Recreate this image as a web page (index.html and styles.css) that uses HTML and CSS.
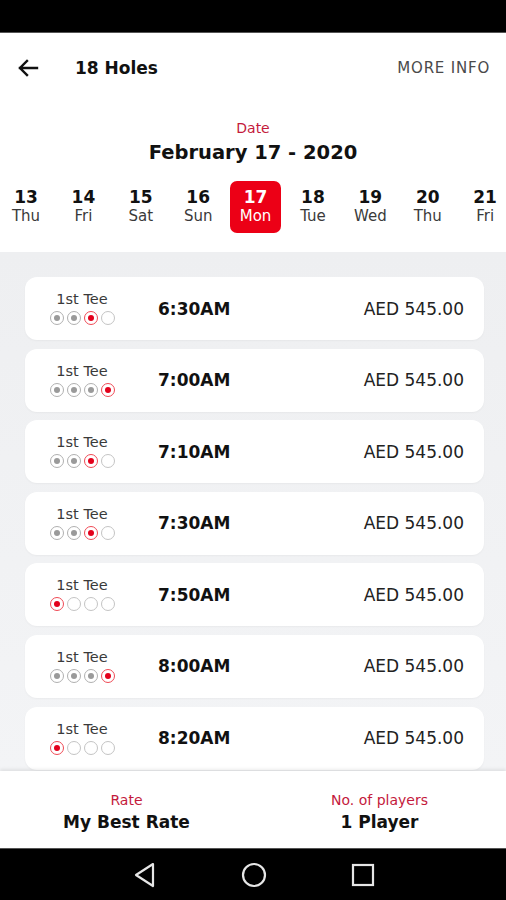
FILE: index.html
```html
<!DOCTYPE html>
<html>
<head>
<meta charset="utf-8">
<link rel="stylesheet" href="styles.css">
</head>
<body>
<div class="screen">
  <div class="statusbar"></div>
  <div class="top">
    <div class="appbar">
      <svg class="back" width="22" height="18" viewBox="0 0 22 18"><path d="M20 9H3M10 2L3 9l7 7" fill="none" stroke="#111" stroke-width="2.4" stroke-linecap="square"/></svg>
      <div class="title">18 Holes</div>
      <div class="more">MORE INFO</div>
    </div>
    <div class="date-label">Date</div>
    <div class="date-value">February 17 - 2020</div>
    <div class="strip">
      <div class="day"><div class="num">13</div><div class="wd">Thu</div></div>
      <div class="day"><div class="num">14</div><div class="wd">Fri</div></div>
      <div class="day"><div class="num">15</div><div class="wd">Sat</div></div>
      <div class="day"><div class="num">16</div><div class="wd">Sun</div></div>
      <div class="day sel"><div class="num">17</div><div class="wd">Mon</div></div>
      <div class="day"><div class="num">18</div><div class="wd">Tue</div></div>
      <div class="day"><div class="num">19</div><div class="wd">Wed</div></div>
      <div class="day"><div class="num">20</div><div class="wd">Thu</div></div>
      <div class="day"><div class="num">21</div><div class="wd">Fri</div></div>
    </div>
  </div>
  <div class="list">
    <div class="card">
      <div class="tee"><div class="tee-name">1st Tee</div><div class="dots"><span class="dot g"></span><span class="dot g"></span><span class="dot r"></span><span class="dot e"></span></div></div>
      <div class="time">6:30AM</div><div class="price">AED 545.00</div>
    </div>
    <div class="card">
      <div class="tee"><div class="tee-name">1st Tee</div><div class="dots"><span class="dot g"></span><span class="dot g"></span><span class="dot g"></span><span class="dot r"></span></div></div>
      <div class="time">7:00AM</div><div class="price">AED 545.00</div>
    </div>
    <div class="card">
      <div class="tee"><div class="tee-name">1st Tee</div><div class="dots"><span class="dot g"></span><span class="dot g"></span><span class="dot r"></span><span class="dot e"></span></div></div>
      <div class="time">7:10AM</div><div class="price">AED 545.00</div>
    </div>
    <div class="card">
      <div class="tee"><div class="tee-name">1st Tee</div><div class="dots"><span class="dot g"></span><span class="dot g"></span><span class="dot r"></span><span class="dot e"></span></div></div>
      <div class="time">7:30AM</div><div class="price">AED 545.00</div>
    </div>
    <div class="card">
      <div class="tee"><div class="tee-name">1st Tee</div><div class="dots"><span class="dot r"></span><span class="dot e"></span><span class="dot e"></span><span class="dot e"></span></div></div>
      <div class="time">7:50AM</div><div class="price">AED 545.00</div>
    </div>
    <div class="card">
      <div class="tee"><div class="tee-name">1st Tee</div><div class="dots"><span class="dot g"></span><span class="dot g"></span><span class="dot g"></span><span class="dot r"></span></div></div>
      <div class="time">8:00AM</div><div class="price">AED 545.00</div>
    </div>
    <div class="card">
      <div class="tee"><div class="tee-name">1st Tee</div><div class="dots"><span class="dot r"></span><span class="dot e"></span><span class="dot e"></span><span class="dot e"></span></div></div>
      <div class="time">8:20AM</div><div class="price">AED 545.00</div>
    </div>
  </div>
  <div class="footer">
    <div class="fcol"><div class="flabel">Rate</div><div class="fvalue">My Best Rate</div></div>
    <div class="fcol"><div class="flabel">No. of players</div><div class="fvalue">1 Player</div></div>
  </div>
  <div class="navbar">
    <svg width="24" height="26" viewBox="0 0 24 26"><path d="M20 2L3 13l17 11z" fill="none" stroke="#e6e6e6" stroke-width="2.2" stroke-linejoin="round"/></svg>
    <svg width="26" height="26" viewBox="0 0 26 26"><circle cx="13" cy="13" r="11" fill="none" stroke="#e6e6e6" stroke-width="2.2"/></svg>
    <svg width="24" height="24" viewBox="0 0 24 24"><rect x="2" y="2" width="20" height="20" fill="none" stroke="#e6e6e6" stroke-width="2.2"/></svg>
  </div>
</div>
</body>
</html>
```
FILE: styles.css
```css
* { box-sizing: border-box; }
html, body { margin: 0; padding: 0; }
body {
  font-family: "DejaVu Sans", Verdana, sans-serif;
  color: #111;
  background: #000;
}
.screen {
  width: 506px;
  height: 900px;
  display: flex;
  flex-direction: column;
  overflow: hidden;
  background: #fff;
}
.statusbar {
  height: 33px;
  background: #000;
  border-bottom: 1px solid #555;
  flex: none;
}
.top {
  background: #fff;
  flex: none;
  padding-bottom: 19px;
}
.appbar {
  height: 70px;
  display: flex;
  align-items: center;
  padding: 0 16px 0 17px;
}
.back { flex: none; }
.title {
  margin-left: 36px;
  font-weight: bold;
  font-size: 17px;
  flex: 1;
}
.more {
  font-size: 15px;
  letter-spacing: 0.8px;
  color: #4a4a4a;
}
.date-label {
  margin-top: 16px;
  text-align: center;
  font-size: 14px;
  line-height: 18px;
  color: #c41a3c;
}
.date-value {
  margin-top: 3px;
  text-align: center;
  font-size: 19.5px;
  line-height: 26px;
  font-weight: bold;
}
.strip {
  margin-top: 15px;
  display: flex;
  gap: 6.4px;
  padding-left: 0.5px;
}
.day {
  flex: none;
  width: 51px;
  height: 52px;
  border-radius: 7px;
  padding-top: 6px;
  text-align: center;
}
.num {
  font-size: 17px;
  font-weight: bold;
  line-height: 21px;
}
.wd {
  font-size: 15px;
  line-height: 18px;
  margin-top: -1px;
  color: #3a3a3a;
}
.day.sel {
  background: #ec0016;
}
.day.sel .num, .day.sel .wd { color: #fff; }
.list {
  flex: 1;
  min-height: 0;
  overflow: hidden;
  background: linear-gradient(#eeeff1, #f3f4f6);
  padding: 25px 22px 0 25px;
  display: flex;
  flex-direction: column;
  gap: 8.6px;
}
.card {
  flex: none;
  height: 63px;
  background: #fff;
  border-radius: 12px;
  display: flex;
  align-items: center;
  padding: 0 20px 0 12px;
  box-shadow: 0 1px 2px rgba(0,0,0,0.04);
}
.tee {
  width: 90px;
  display: flex;
  flex-direction: column;
  align-items: center;
  margin-top: -2px;
}
.tee-name {
  font-size: 14.5px;
  line-height: 18px;
  color: #3a3a3a;
}
.dots {
  margin-top: 3px;
  display: flex;
  gap: 3px;
}
.dot {
  width: 14px;
  height: 14px;
  border-radius: 50%;
  border: 1.5px solid #c4c4c4;
  position: relative;
}
.dot.g::after, .dot.r::after {
  content: "";
  position: absolute;
  left: 50%;
  top: 50%;
  width: 6px;
  height: 6px;
  margin: -3px 0 0 -3px;
  border-radius: 50%;
  background: #9a9a9a;
}
.dot.g { border-color: #b0b0b0; }
.dot.r { border-color: #ef4a55; }
.dot.r::after { background: #e3001b; }
.time {
  margin-left: 31px;
  font-size: 17px;
  font-weight: bold;
  flex: 1;
}
.price {
  font-size: 17px;
  color: #222;
}
.footer {
  flex: none;
  height: 77px;
  background: #fff;
  display: flex;
  box-shadow: 0 -2px 3px rgba(0,0,0,0.08);
  position: relative;
}
.fcol {
  flex: 1;
  text-align: center;
  padding-top: 19px;
}
.flabel {
  font-size: 14px;
  line-height: 20px;
  color: #c41a3c;
}
.fvalue {
  font-size: 17px;
  line-height: 24px;
  font-weight: bold;
}
.navbar {
  flex: none;
  height: 52px;
  background: #000;
  border-top: 1px solid #555;
  display: flex;
  align-items: center;
  justify-content: center;
  gap: 84px;
  padding-left: 2px;
}
```
